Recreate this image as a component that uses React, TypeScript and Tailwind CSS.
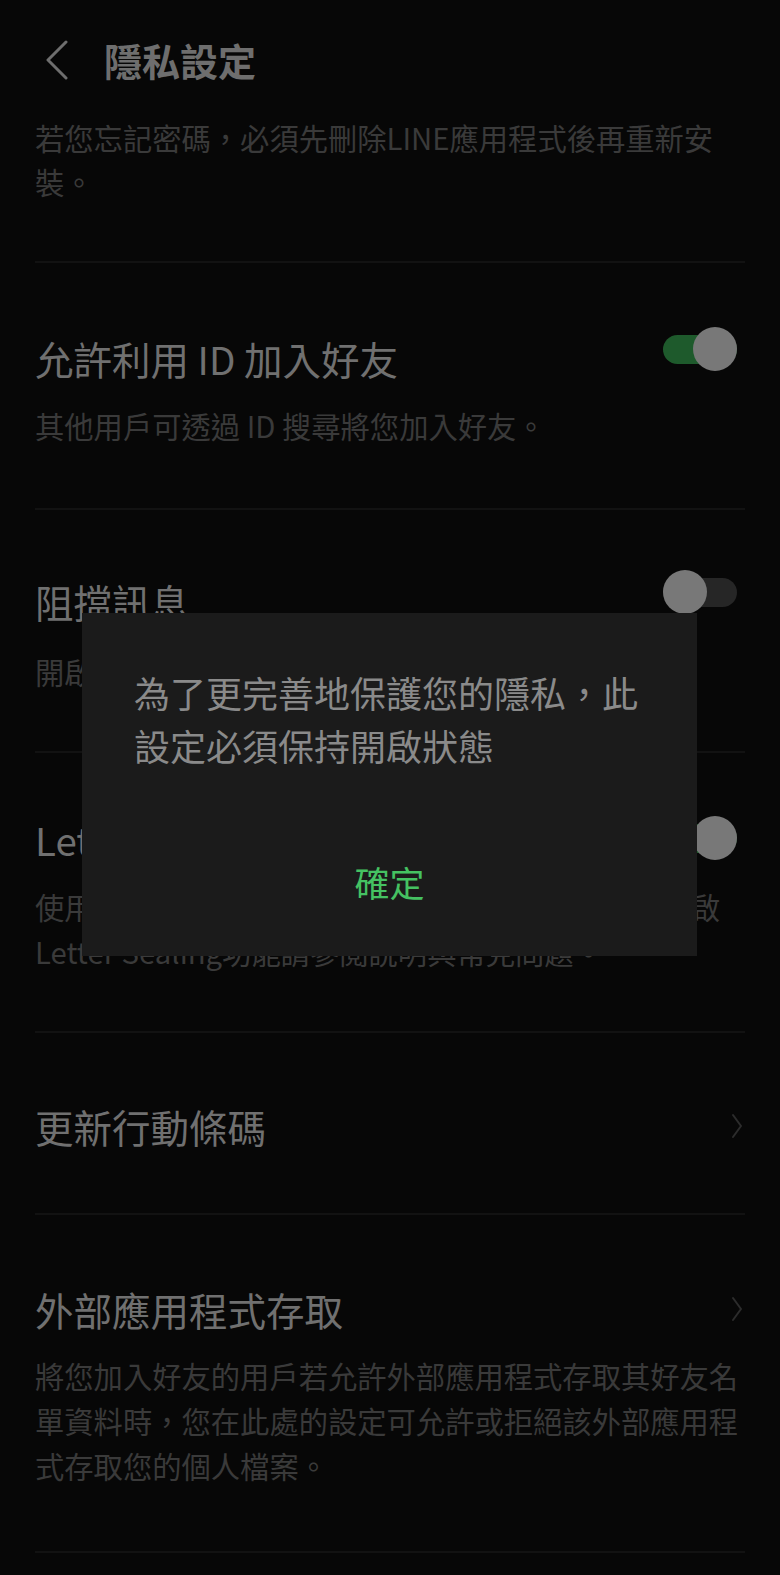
const FONT = "font-['Noto_Sans_CJK_TC','Noto_Sans',sans-serif]";

function Toggle({ on, lift }: { on: boolean; lift: string }) {
  return (
    <div className="h-[48px] flex items-center shrink-0 mr-[8px]">
      <div className={`relative w-[74px] h-[44px] flex items-center ${lift}`}>
        <div className={`w-full h-[29px] rounded-full ${on ? "bg-[#1e5a2c]" : "bg-[#262626]"}`} />
        <div
          className={`absolute top-0 w-[44px] h-[44px] rounded-full bg-[#787878] ${on ? "right-0" : "left-0"}`}
        />
      </div>
    </div>
  );
}

function ChevronRight() {
  return (
    <svg className="w-[12px] h-[26px] shrink-0 mr-[2px]" viewBox="0 0 12 26" fill="none" stroke="#2c2c2c" strokeWidth={2} strokeLinecap="round" strokeLinejoin="round">
      <path d="M2 2l8 11-8 11" />
    </svg>
  );
}

function Divider() {
  return <div className="mx-[35px] h-[2px] bg-[#121212]" />;
}

type Row = {
  title: string;
  desc?: string[];
  toggle?: boolean;
  lift?: string;
  chevron?: boolean;
  pt: string;
  gap?: string;
  pb: string;
};

const ROWS: Row[] = [
  {
    title: "允許利用 ID 加入好友",
    desc: ["其他用戶可透過 ID 搜尋將您加入好友。"],
    toggle: true,
    lift: "-translate-y-[9px]",
    pt: "pt-[71px]",
    gap: "mt-[21px]",
    pb: "pb-[60px]",
  },
  {
    title: "阻擋訊息",
    desc: ["開啟此功能後，將不會接收來自非好友的訊息。"],
    toggle: false,
    lift: "-translate-y-[9px]",
    pt: "pt-[67px]",
    gap: "mt-[24px]",
    pb: "pb-[57px]",
  },
  {
    title: "Letter Sealing",
    desc: ["使用Letter Sealing後，訊息將會加密保護，若要開啟", "Letter Sealing功能請參閱說明與常見問題。"],
    toggle: true,
    lift: "-translate-y-[1px]",
    pt: "pt-[62px]",
    gap: "mt-[21px]",
    pb: "pb-[57px]",
  },
  {
    title: "更新行動條碼",
    chevron: true,
    pt: "pt-[69px]",
    pb: "pb-[63px]",
  },
  {
    title: "外部應用程式存取",
    desc: [
      "將您加入好友的用戶若允許外部應用程式存取其好友名單資料時，您在此處的設定可允許或拒絕該外部應用程式存取您的個人檔案。",
    ],
    chevron: true,
    pt: "pt-[70px]",
    gap: "mt-[20px]",
    pb: "pb-[63px]",
  },
];

export default function App() {
  return (
    <div className={`relative w-[780px] h-[1575px] overflow-hidden bg-[#070707] ${FONT}`}>
      {/* Header */}
      <div className="h-[120px] flex items-center pl-[44px]">
        <svg className="w-[26px] h-[40px]" viewBox="0 0 26 40" fill="none" stroke="#6e6e6e" strokeWidth={3} strokeLinecap="round" strokeLinejoin="round">
          <path d="M22 2L4 20l18 18" />
        </svg>
        <h1 className="ml-[34px] text-[38px] leading-[48px] font-bold text-[#6e6e6e]">隱私設定</h1>
      </div>

      {/* Passcode note */}
      <div className="px-[35px] pb-[58px]">
        <p className="text-[29.3px] leading-[44px] text-[#3a3a3a] -mt-[5px]">
          若您忘記密碼，必須先刪除LINE應用程式後再重新安裝。
        </p>
      </div>

      {ROWS.map((row) => (
        <div key={row.title}>
          <Divider />
          <div className={`px-[35px] ${row.pt} ${row.pb}`}>
            <div className="flex items-center justify-between">
              <h2 className="text-[38.5px] leading-[48px] text-[#707070] whitespace-nowrap">{row.title}</h2>
              {row.toggle !== undefined && <Toggle on={row.toggle} lift={row.lift ?? ""} />}
              {row.chevron && <ChevronRight />}
            </div>
            {row.desc && (
              <div className={row.gap}>
                {row.desc.map((d) => (
                  <p key={d} className="text-[29.3px] leading-[45px] text-[#3a3a3a]">
                    {d}
                  </p>
                ))}
              </div>
            )}
          </div>
        </div>
      ))}
      <Divider />

      {/* Dialog */}
      <div className="absolute left-[82px] top-[613px] w-[615px] h-[343px] bg-[#1b1b1b] flex flex-col">
        <p className="px-[52px] pt-[53px] text-[36px] leading-[53px] text-[#8a8a8a]">
          為了更完善地保護您的隱私，此設定必須保持開啟狀態
        </p>
        <div className="mt-[86px] text-center text-[35px] leading-[48px] text-[#45c262]">確定</div>
      </div>
    </div>
  );
}
